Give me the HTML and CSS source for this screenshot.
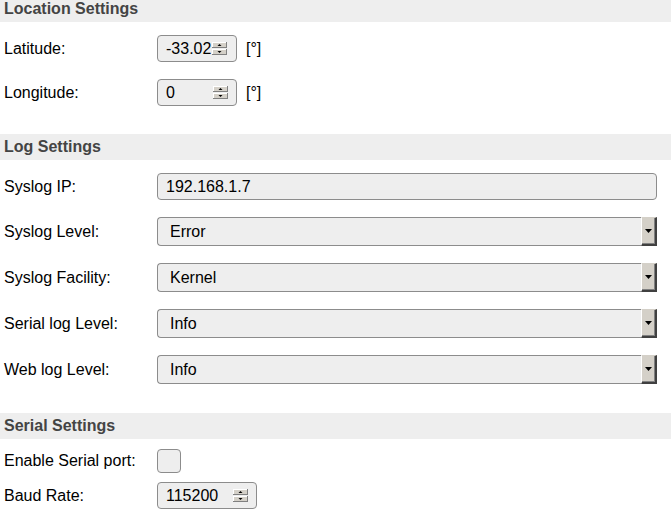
FILE: index.html
```html
<!DOCTYPE html>
<html>
<head>
<meta charset="utf-8">
<link rel="stylesheet" href="styles.css">
</head>
<body>
<section class="section first">
  <div class="section-head">Location Settings</div>
  <div class="rows">
    <div class="row">
      <label class="lbl">Latitude:</label>
      <div class="field num w80"><span class="val tight">-33.02</span><svg class="spin" width="15" height="13" viewBox="0 0 15 13"><rect x="0" y="0" width="15" height="6" fill="#d4d0c8"/><path d="M0 0.5H14.5M0.5 0V6" stroke="#fff"/><path d="M14.5 0V6M0 5.5H15" stroke="#808080"/><polygon points="5.5,4 9.5,4 7.5,2" fill="#000"/><rect x="0" y="7" width="15" height="6" fill="#d4d0c8"/><path d="M0 7.5H14.5M0.5 7V13" stroke="#fff"/><path d="M14.5 7V13M0 12.5H15" stroke="#808080"/><polygon points="5.5,9 9.5,9 7.5,11" fill="#000"/></svg></div>
      <span class="unit">[°]</span>
    </div>
    <div class="row">
      <label class="lbl">Longitude:</label>
      <div class="field num w80"><span class="val">0</span><svg class="spin" width="15" height="13" viewBox="0 0 15 13"><rect x="0" y="0" width="15" height="6" fill="#d4d0c8"/><path d="M0 0.5H14.5M0.5 0V6" stroke="#fff"/><path d="M14.5 0V6M0 5.5H15" stroke="#808080"/><polygon points="5.5,4 9.5,4 7.5,2" fill="#000"/><rect x="0" y="7" width="15" height="6" fill="#d4d0c8"/><path d="M0 7.5H14.5M0.5 7V13" stroke="#fff"/><path d="M14.5 7V13M0 12.5H15" stroke="#808080"/><polygon points="5.5,9 9.5,9 7.5,11" fill="#000"/></svg></div>
      <span class="unit">[°]</span>
    </div>
  </div>
</section>

<section class="section">
  <div class="section-head">Log Settings</div>
  <div class="rows log">
    <div class="row">
      <label class="lbl">Syslog IP:</label>
      <div class="field text w500"><span class="val">192.168.1.7</span></div>
    </div>
    <div class="row">
      <label class="lbl">Syslog Level:</label>
      <div class="select w500"><span class="sval">Error</span><span class="drop"><svg width="7" height="4" viewBox="0 0 7 4"><polygon points="0,0 7,0 3.5,4" fill="#000"/></svg></span></div>
    </div>
    <div class="row">
      <label class="lbl">Syslog Facility:</label>
      <div class="select w500"><span class="sval">Kernel</span><span class="drop"><svg width="7" height="4" viewBox="0 0 7 4"><polygon points="0,0 7,0 3.5,4" fill="#000"/></svg></span></div>
    </div>
    <div class="row">
      <label class="lbl">Serial log Level:</label>
      <div class="select w500"><span class="sval">Info</span><span class="drop"><svg width="7" height="4" viewBox="0 0 7 4"><polygon points="0,0 7,0 3.5,4" fill="#000"/></svg></span></div>
    </div>
    <div class="row">
      <label class="lbl">Web log Level:</label>
      <div class="select w500"><span class="sval">Info</span><span class="drop"><svg width="7" height="4" viewBox="0 0 7 4"><polygon points="0,0 7,0 3.5,4" fill="#000"/></svg></span></div>
    </div>
  </div>
</section>

<section class="section">
  <div class="section-head">Serial Settings</div>
  <div class="rows serial">
    <div class="row">
      <label class="lbl">Enable Serial port:</label>
      <div class="check"></div>
    </div>
    <div class="row">
      <label class="lbl">Baud Rate:</label>
      <div class="field num w100"><span class="val">115200</span><svg class="spin" width="15" height="13" viewBox="0 0 15 13"><rect x="0" y="0" width="15" height="6" fill="#d4d0c8"/><path d="M0 0.5H14.5M0.5 0V6" stroke="#fff"/><path d="M14.5 0V6M0 5.5H15" stroke="#808080"/><polygon points="5.5,4 9.5,4 7.5,2" fill="#000"/><rect x="0" y="7" width="15" height="6" fill="#d4d0c8"/><path d="M0 7.5H14.5M0.5 7V13" stroke="#fff"/><path d="M14.5 7V13M0 12.5H15" stroke="#808080"/><polygon points="5.5,9 9.5,9 7.5,11" fill="#000"/></svg></div>
    </div>
  </div>
</section>
</body>
</html>
```

FILE: styles.css
```css
html, body {
  margin: 0;
  padding: 0;
  background: #fff;
}
body {
  font-family: "Liberation Sans", Arial, sans-serif;
  font-size: 16px;
  color: #000;
  overflow: hidden;
}
.section-head {
  height: 26px;
  line-height: 26px;
  background: #eeeeee;
  color: #444;
  font-weight: bold;
  padding-left: 4px;
}
.first {
  margin-top: -4px;
}
.rows {
  display: flex;
  flex-direction: column;
  gap: 17px;
  padding: 13px 0 28px 4px;
}
.rows.log {
  padding-bottom: 29px;
}
.rows.serial {
  gap: 9px;
  padding-top: 10px;
  padding-bottom: 0;
}
.row {
  display: flex;
  align-items: center;
}
.lbl {
  width: 153px;
  flex: none;
}
.field {
  box-sizing: border-box;
  height: 27px;
  border: 1px solid #8c8c8c;
  border-radius: 4px;
  background: #eeeeee;
  display: flex;
  align-items: center;
  padding-left: 8px;
}
.w80 { width: 80px; }
.w100 { width: 100px; }
.w500 { width: 500px; }
.val {
  flex: 1;
  white-space: nowrap;
  overflow: hidden;
}
.val.tight {
  flex: none;
  margin-right: 1px;
}
.num {
  padding-right: 8px;
}
.spin {
  flex: none;
  display: block;
}
.text .val {
  padding-left: 0;
}
.unit {
  margin-left: 9px;
}
.select {
  box-sizing: border-box;
  height: 29px;
  border: 1px solid #8c8c8c;
  border-right: none;
  border-radius: 4px 0 0 4px;
  background: #eeeeee;
  display: flex;
  align-items: stretch;
  padding-left: 12px;
}
.sval {
  flex: 1;
  display: flex;
  align-items: center;
}
.drop {
  flex: none;
  box-sizing: border-box;
  width: 16px;
  margin-top: -1px;
  margin-bottom: -1px;
  background: #d4d0c8;
  border-left: 1px solid #fff;
  border-top: 1px solid #d4d0c8;
  border-right: 2px solid #404040;
  border-bottom: 2px solid #404040;
  box-shadow: inset -1px -1px 0 #808080;
  display: flex;
  align-items: center;
  justify-content: center;
}
.drop svg {
  display: block;
}
.check {
  box-sizing: border-box;
  width: 24px;
  height: 24px;
  border: 1px solid #8c8c8c;
  border-radius: 4px;
  background: #eeeeee;
}
```
